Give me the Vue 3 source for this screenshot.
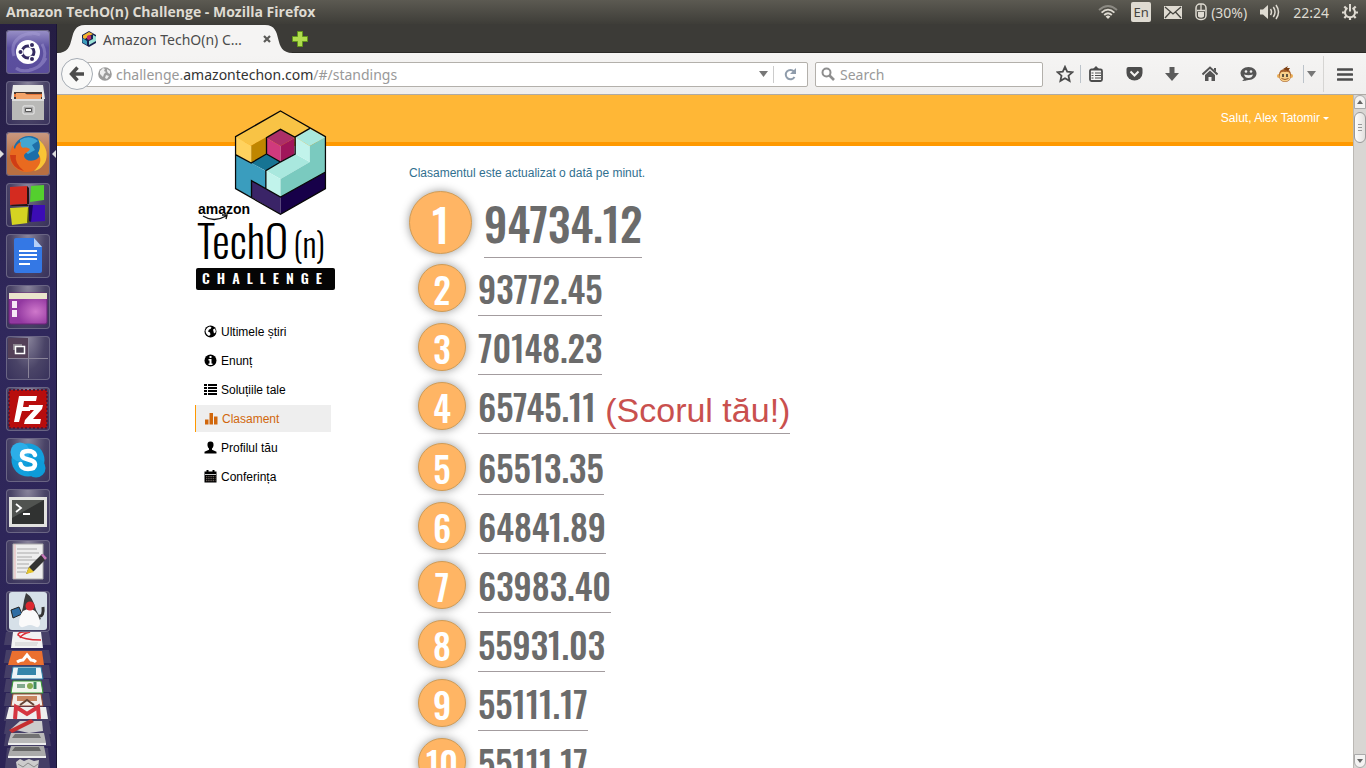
<script setup>
const menu = [
  { icon: 'globe', label: 'Ultimele știri' },
  { icon: 'info', label: 'Enunț' },
  { icon: 'list', label: 'Soluțiile tale' },
  { icon: 'stats', label: 'Clasament', active: true },
  { icon: 'user', label: 'Profilul tău' },
  { icon: 'calendar', label: 'Conferința' }
]
const scores = [
  '94734.12', '93772.45', '70148.23', '65745.11', '65513.35',
  '64841.89', '63983.40', '55931.03', '55111.17', '55111.17'
]
const ownRank = 4
</script>

<template>
  <div class="desktop">
    <header class="panel">
      <h1 class="window-title">Amazon TechO(n) Challenge - Mozilla Firefox</h1>
      <div class="indicators">
        <button class="ind" aria-label="Network">
          <svg width="20" height="16" viewBox="0 0 20 16" fill="none" stroke-width="1.8">
            <path d="M1 6 Q10 -2 19 6" stroke="#8c8a83" /><path d="M3.6 8.6 Q10 2.6 16.4 8.6" stroke="#dfdbd2" />
            <path d="M6.2 11 Q10 7.4 13.8 11" stroke="#dfdbd2" /><path d="M7.6 12.4 Q10 10.4 12.4 12.4 L10 15z" fill="#dfdbd2" />
          </svg>
        </button>
        <button class="ind lang">En</button>
        <button class="ind" aria-label="Messages">
          <svg width="18" height="13" viewBox="0 0 18 13"><path fill="#dfdbd2" d="M0 0h18v13H0z" /><path d="M1 1l8 7 8-7M1 12l5.5-6M17 12l-5.500-6" fill="none" stroke="#45443f" stroke-width="1.3" /></svg>
        </button>
        <button class="ind battery" aria-label="Mouse battery">
          <svg width="12" height="18" viewBox="0 0 12 18"><rect x="1" y="1" width="10" height="15.500" rx="4" fill="none" stroke="#dfdbd2" stroke-width="1.5" /><path d="M6 1v6M2 7.500h8" stroke="#dfdbd2" stroke-width="1.3" /><path d="M3 9h6v4.500q-3 2.500-6 0z" fill="#dfdbd2" /></svg>
          <span>(30%)</span>
        </button>
        <button class="ind" aria-label="Sound">
          <svg width="20" height="16" viewBox="0 0 20 16"><path d="M0 5.500h3L8 1v14L3 10.500H0z" fill="#dfdbd2" /><path d="M10.500 5q2 3 0 6M13.300 3q3.500 5 0 10M16 1q5 7 0 14" fill="none" stroke="#dfdbd2" stroke-width="1.5" /></svg>
        </button>
        <button class="ind">22:24</button>
        <button class="ind" aria-label="Session">
          <svg width="16" height="18" viewBox="0 0 16 18" fill="none" stroke="#dfdbd2"><path d="M5.500 5a5 5 0 1 0 5 0" stroke-width="2" /><path d="M8 1v7.500" stroke-width="2" /><path d="M8 14.500v2.500M2.800 9.500H0M13.200 9.500H16M4.300 13l-2 2M11.700 13l2 2M4.300 5.500l-2-2M11.700 5.500l2-2" stroke-width="2.200" /></svg>
        </button>
      </div>
    </header>

    <div class="workspace">
      <nav class="launcher" aria-label="Launcher">
        <button class="tile dash" aria-label="Dash">
          <svg viewBox="0 0 44 44"><g fill="none" stroke="#a9a0d8" stroke-width="3" opacity=".45"><path d="M8 26C4 14 12 3 26 4M36 14c6 10 2 24-13 26M10 38c8 6 24 2 30-10M34 5C26 1 12 4 7 16" /></g><circle cx="22" cy="22" r="12" fill="#fff" /><circle cx="22" cy="22" r="6" fill="none" stroke="#332a60" stroke-width="3" /><g fill="#332a60" stroke="#fff" stroke-width="1.200"><circle cx="14.500" cy="22" r="2.600" /><circle cx="26" cy="15" r="2.600" /><circle cx="26" cy="29" r="2.600" /></g></svg>
        </button>
        <button class="tile" aria-label="Files">
          <svg viewBox="0 0 44 44"><path d="M7 4h30l2 14H5z" fill="#e8e8e6" /><path d="M8 11h28v8H8z" fill="#4a3a32" /><path d="M8 13h28v3H8z" fill="#e9773a" /><path d="M10 12h9l2 2h14v4H10z" fill="#f3a46a" /><path d="M6 18h32v21H6z" fill="#b9b9b7" /><path d="M6 18h32v2H6z" fill="#ddd" /><rect x="17" y="25" width="11" height="8" rx="1" fill="#aaa" stroke="#eee" /><path d="M19.500 27.500h6v3h-6z" fill="#eee" stroke="#555" /></svg>
        </button>
        <button class="tile firefox running" aria-label="Firefox">
          <svg viewBox="0 0 44 44"><circle cx="23" cy="20" r="16" fill="#1d6ea8" /><path d="M14 8q9-6 18 1l-6 4 3 5-7 4-8-6z" fill="#4cb4dc" opacity=".8" /><path d="M4 23c0-5 2-8 3-10 0 2 1 3 2 4 1-4 3-6 6-7-1 3 0 5 2 6 3-1 5 0 7 1-1 3-6 4-6 7 1 5 8 6 13 3 4-3 5-8 3-13 4 5 5 10 3 15-3 7-9 11-16 11C11 40 4 33 4 23z" fill="#e96a1f" /><path d="M32 7c8 6 10 14 8 21-2 6-7 10-12 11 6-6 7-9 6-14l-2-4c3-5 2-10 0-14z" fill="#f8c435" /><path d="M4 23q1 13 14 16-10-8-8-16z" fill="#cf3d16" /></svg>
        </button>
        <button class="tile" aria-label="Code::Blocks">
          <svg viewBox="0 0 44 44"><path d="M4 4l17-1v18l-17 1z" fill="#d42b20" /><path d="M21 3l2 2v16h-2zM4 22l17-1 2 2H6z" fill="#261414" /><path d="M25 3l13-1v15l-14 2z" fill="#54cf2e" /><path d="M4 25l18-1v16L6 42z" fill="#d4d322" /><path d="M22 24l2 2v13l-3 1z" fill="#4d4e12" /><path d="M26 22h13v16l-14 1z" fill="#3b0cb5" /><path d="M23 22h4l-2 17-2-1z" fill="#180557" /></svg>
        </button>
        <button class="tile" aria-label="Docs">
          <svg viewBox="0 0 44 44"><path d="M8 6q0-2 2-2h18l8 9v24q0 2-2 2H10q-2 0-2-2z" fill="#3478e5" /><path d="M28 4l8 9h-8z" fill="#b6d0f7" /><path d="M13 17h18M13 21h18M13 25h18M13 30h11" stroke="#fff" stroke-width="2" /></svg>
        </button>
        <button class="tile" aria-label="Videos">
          <svg viewBox="0 0 44 44"><defs><radialGradient id="violet" cx=".7" cy=".6"><stop offset="0" stop-color="#cf78cb" /><stop offset="1" stop-color="#9238a0" /></radialGradient></defs><rect x="3" y="8" width="38" height="31" rx="2" fill="url(#violet)" stroke="#6b2379" /><path d="M3 8h38v6H3z" fill="#e9e5cc" /><path d="M6 16h5v7H6zM6 25h5v7H6z" fill="#f6e9f5" /></svg>
        </button>
        <button class="tile" aria-label="Workspace switcher">
          <svg viewBox="0 0 44 44"><path d="M2 2h20v20H2z" fill="#534058" /><path d="M22.500 2v40M2 22.500h40" stroke="#8a8499" /><path d="M7 14V8h9v3H9v3z" fill="#8d8790" /><path d="M9.500 10.500h9v7h-9z" fill="#4a4052" stroke="#fff" stroke-width="1.5" /></svg>
        </button>
        <button class="tile" aria-label="FileZilla">
          <svg viewBox="0 0 44 44"><path d="M3 3h38v38H3z" fill="#b80d0d" /><path d="M3 3h38v38H3z" fill="none" stroke="#5b1530" stroke-width="2" stroke-dasharray="2 2" /><path d="M13 9h18l-1 5H18l-1 6h8l-1 4h-8l-3 11H8z" fill="#fff" /><path d="M23 18h14l-1 4-9 10h8l-1 5H18l1-4 9-10h-6z" fill="#fff" /></svg>
        </button>
        <button class="tile" aria-label="Skype">
          <svg viewBox="0 0 44 44"><circle cx="22" cy="22" r="16.500" fill="#139fdc" /><circle cx="14" cy="14" r="9.500" fill="#2caee8" /><circle cx="30" cy="30" r="9.500" fill="#0d9bd8" /><path d="M29 17c-1-3-3-4-7-4-4 0-6 1.500-6 4 0 6 13 3 13 9.500 0 3-3 4.500-7 4.500-4 0-7-1.500-7.500-5" fill="none" stroke="#fff" stroke-width="4.500" stroke-linecap="round" /></svg>
        </button>
        <button class="tile" aria-label="Terminal">
          <svg viewBox="0 0 44 44"><path d="M3 8h38v30H3z" fill="#e2e2df" /><path d="M6 11h32v24H6z" fill="#303231" /><path d="M6 11h32L6 29z" fill="#505350" /><path d="M10 15l5 4-5 4M17 25h7" fill="none" stroke="#fff" stroke-width="1.800" /></svg>
        </button>
        <button class="tile" aria-label="Text editor">
          <svg viewBox="0 0 44 44"><path d="M7 4h30v35H7z" fill="#eee" stroke="#aaa" /><path d="M11 9h20M11 13h22M11 17h15M11 20h20M11 24h12M11 28h14M11 32h9" stroke="#aaa" /><path d="M9 4v35" stroke="#e6b1b1" /><path d="M23 27L36 14l5 4-13 13-8 3z" fill="#333" /><path d="M35 15l2-1 4 4-2 2z" fill="#c779bb" /><path d="M23 27l5 5-8 2z" fill="#e6c52b" /></svg>
        </button>
        <button class="tile short" aria-label="Java">
          <svg viewBox="0 0 44 41"><rect x="3" y="1" width="38" height="38" rx="3" fill="#d6e0e8" /><path d="M5 19l8-3 3 7-9 4z" fill="#2d6ca3" stroke="#222" /><path d="M20 2q7 4 10 17l5 9q-9 6-21 0l3-12q1-8 3-14z" fill="#3b3b3d" /><path d="M17 20q7-4 12 0 5 5 5 13-1 5-6 2-4-2-8 0-6 3-7-2 0-8 4-13z" fill="#fafafa" /><path d="M33 25q5 1 4-9" fill="none" stroke="#333" stroke-width="3" /><circle cx="24" cy="15" r="4.500" fill="#dc2830" /></svg>
        </button>
        <svg class="stack" viewBox="0 0 57 136">
          <g fill="#5b5674" opacity=".55"><path d="M7 0h43l2 13H5zM7 18h43l2 13H5zM7 33h43l2 13H5zM7 47h43l2 13H5zM7 61h43l2 13H5zM7 75h43l2 14H5zM7 89h43l2 13H5zM7 101h43l2 13H5zM8 116h41l2 20H6z" /></g>
          <path d="M14 0h28l2 16H12z" fill="#f2f2f2" /><path d="M42 8Q24 8 19 3q0-4 12-3-8 2-10 6" fill="none" stroke="#d92c35" stroke-width="1.600" /><path d="M16 11h23M16 13h22" stroke="#ccc" />
          <path d="M13 19h30l2 14H9z" fill="#eb7030" /><path d="M18 30q3-2 6-2l4-5 4 5q3 0 5 2" fill="none" stroke="#fff" stroke-width="3" />
          <path d="M14 35h28l2 12H12z" fill="#edf4f7" stroke="#297fa6" /><path d="M19 36h18v7H18z" fill="#3585aa" />
          <path d="M14 49h28l2 12H12z" fill="#f1f6ed" stroke="#349c32" /><path d="M18 52h8v4h-8z" fill="#80a98c" /><circle cx="31" cy="54" r="3" fill="#86ac50" /><path d="M36 50v7" stroke="#418c60" stroke-width="3" />
          <path d="M14 62h28l2 12H12z" fill="#f3ece8" stroke="#9c4d31" /><path d="M18 64h20v5H18z" fill="#c98560" /><path d="M21 73l7-5 7 5" fill="none" stroke="#654335" stroke-width="2" />
          <path d="M10 75h37l2 12H7z" fill="#eee" /><path d="M16 87l1-12 11 7 11-7 1 12" fill="none" stroke="#d53540" stroke-width="4" />
          <path d="M21 89h22l1 10-14 2-18-4z" fill="#ccc" /><path d="M10 98l22-11 3 3-22 11z" fill="#c62e30" />
          <path d="M12 101h33l2 10H9z" fill="#b9b9b9" /><path d="M16 102h24l2 4H13z" fill="#737373" /><path d="M9 111h38v2H9z" fill="#eee" />
          <path d="M12 114h33l2 10H9z" fill="#aaa" /><path d="M16 115h24l2 4H13z" fill="#666" /><path d="M9 124h38v2H9z" fill="#eee" />
          <path d="M17 130l4-3 4 2 5-2 5 2 5-1-1 8H18z" fill="#ccc" /><path d="M19 132l5 3 5-4 6 4 4-3" fill="none" stroke="#8a8a8a" />
        </svg>
      </nav>

      <div class="browser">
        <div class="tabs">
          <div class="tab">
            <svg class="tab-shape" viewBox="0 0 236 28" preserveAspectRatio="none"><path d="M0 28C22 28 8 0 28 0H208C228 0 214 28 236 28z" fill="#f5f4f3" /></svg>
            <svg class="favicon" viewBox="0 0 16 16"><path d="M8 0l7 4v8l-7 4-7-4V4z" fill="#18224f" /><path d="M2 4.500L8 1l4 2-4 2-4 3-2-1z" fill="#f4b52e" /><path d="M6 5l2-1 2 1v3L8 9 6 8z" fill="#c12a64" /><path d="M1.500 7L6 10v4l-4.500-2.500z" fill="#3a9cbc" /><path d="M12 4l3 1.500V10l-7 4v-4l4-2z" fill="#9be2d6" /></svg>
            <span class="tab-title">Amazon TechO(n) C…</span>
            <button class="close" aria-label="Close tab"><svg width="8" height="8" viewBox="0 0 8 8"><path d="M1 1l6 6M7 1L1 7" stroke="#5b5b58" stroke-width="2.200" /></svg></button>
          </div>
          <button class="new-tab" aria-label="New tab"><svg width="16" height="16" viewBox="0 0 16 16"><path d="M5.500.5h5v5h5v5h-5v5h-5v-5h-5v-5h5z" fill="#b0dc4e" stroke="#62961b" /></svg></button>
        </div>

        <div class="toolbar">
          <button class="back" aria-label="Back"><svg width="16" height="16" viewBox="0 0 16 16"><path d="M8.500 1.500L2.500 8l6 6.500M3 8h12" fill="none" stroke="#4c4c4c" stroke-width="3.400" /></svg></button>
          <div class="url">
            <svg width="14" height="14" viewBox="0 0 14 14"><circle cx="7" cy="7" r="6.800" fill="#9b9b9b" /><path d="M2 4l3-3 2 1-1 2 2 1-2 2-1 3-3-3zM9 2l3 2v3l-2-1-1-2zM8 8l3 1-2 3-2-1z" fill="#eee" /></svg>
            <div class="address" role="textbox" aria-label="Address" contenteditable="true" spellcheck="false">challenge.<b>amazontechon.com</b>/#/standings</div>
            <button class="drop" aria-label="History"><svg width="9" height="6" viewBox="0 0 9 6"><path d="M0 0h9L4.500 6z" fill="#777" /></svg></button>
            <button class="reload" aria-label="Reload"><svg width="13" height="13" viewBox="0 0 13 13"><path d="M10 3.500A4.700 4.700 0 1 0 10.500 9" fill="none" stroke="#8f9cab" stroke-width="2" /><path d="M12 0v6H6z" fill="#8f9cab" /></svg></button>
          </div>
          <label class="search">
            <svg width="14" height="14" viewBox="0 0 14 14"><circle cx="5.500" cy="5.500" r="4" fill="none" stroke="#8e8e8e" stroke-width="2" /><path d="M8.500 8.500L13 13" stroke="#8e8e8e" stroke-width="2.600" /></svg>
            <input type="text" placeholder="Search" aria-label="Search">
          </label>
          <button class="tool star" aria-label="Bookmark"><svg width="18" height="18" viewBox="0 0 18 18"><path d="M9 1.800l2.200 4.800 5.200.6-3.900 3.500 1.100 5.200L9 13.300l-4.600 2.600 1.100-5.200L1.600 7.200l5.200-.6z" fill="none" stroke="#4c4c4c" stroke-width="1.800" /></svg></button>
          <span class="sep"></span>
          <button class="tool lists" aria-label="Bookmarks menu"><svg width="16" height="16" viewBox="0 0 16 16"><rect x="2" y="3.500" width="12" height="11.500" rx="1.500" fill="#f5f4f3" stroke="#4c4c4c" stroke-width="1.800" /><path d="M4 4L8 0l4 4z" fill="#4c4c4c" /><path d="M3.500 7h2M7 7h6M3.500 9.500h2M7 9.500h6M3.500 12h2M7 12h6" stroke="#4c4c4c" stroke-width="1.200" /></svg></button>
          <button class="tool" aria-label="Pocket"><svg width="17" height="16" viewBox="0 0 17 16"><path d="M2.500 1h12Q16.500 1 16.500 3v4a8 7.500 0 0 1-16 0V3Q.5 1 2.500 1z" fill="#4c4c4c" /><path d="M4.500 5.500l4 4 4-4" fill="none" stroke="#f3f2f1" stroke-width="2" /></svg></button>
          <button class="tool" aria-label="Downloads"><svg width="14" height="16" viewBox="0 0 14 16"><path d="M4.500 1h5v6H14l-7 8-7-8h4.500z" fill="#5b5b5b" /></svg></button>
          <button class="tool" aria-label="Home"><svg width="16" height="16" viewBox="0 0 16 16"><path d="M.5 8.500L8 1.500l7.500 7" fill="none" stroke="#555" stroke-width="2" /><path d="M3 9l5-4.500L13 9v6H9.500v-4h-3v4H3z" fill="#555" /><path d="M12 2h2v4l-2-2z" fill="#555" /></svg></button>
          <button class="tool" aria-label="Hello"><svg width="17" height="16" viewBox="0 0 17 16"><path d="M8.500 1c5 0 8 3 8 6.500S13 14 9 14c-2 0-3 1-7 1 2-1 2-2 1.500-2.500A6 6 0 0 1 .5 7.500C.5 4 3.500 1 8.500 1z" fill="#555" /><circle cx="6" cy="5.500" r="1.300" fill="#eee" /><circle cx="11" cy="5.500" r="1.300" fill="#eee" /><path d="M4 8.500q4.500 1.500 9 0-1 3.500-4.500 3.500T4 8.500z" fill="#eee" /></svg></button>
          <button class="tool monkey" aria-label="Greasemonkey"><svg width="16" height="17" viewBox="0 0 16 17"><circle cx="2" cy="10" r="2" fill="#e9ab52" /><circle cx="14" cy="10" r="2" fill="#e9ab52" /><path d="M2 9q0-6 6-6t6 6q0 7-6 7T2 9z" fill="#a8622a" /><path d="M3 8q1-3 5-2 4-1 5 2 2 7-5 7.500Q1 15 3 8z" fill="#f8d089" /><path d="M6 3l5-3-1 2h3l-2 3z" fill="#7d3f12" /><path d="M6 8v3M10 8v3" stroke="#222" stroke-width="1.400" /><path d="M4.500 12.500q3.500 2 7 0" fill="none" stroke="#9c5a25" /></svg></button>
          <span class="sep"></span>
          <button class="tool caret" aria-label="More"><svg width="9" height="6" viewBox="0 0 9 6"><path d="M0 0h9L4.500 6z" fill="#777" /></svg></button>
          <span class="sep tall"></span>
          <button class="tool hamburger" aria-label="Menu"><svg width="16" height="13" viewBox="0 0 16 13"><path d="M1 1.500h14M1 6.500h14M1 11.500h14" stroke="#4c4c4c" stroke-width="2.600" stroke-linecap="round" /></svg></button>
        </div>

        <div class="viewport">
          <div class="page">
            <div class="banner"><a href="#" class="account">Salut, Alex Tatomir <svg width="6" height="3" viewBox="0 0 6 3"><path d="M0 0h6L3 3z" fill="#fff" /></svg></a></div>
            <div class="container">
              <aside class="side">
                <svg class="logo" viewBox="0 0 140 180" role="img" aria-label="Amazon TechO(n) Challenge">
                  <svg x="39.500" y="0" width="92" height="105.300" viewBox="164 31 276 316">
                    <path d="M167 111L302 34 390 86 346 112 302 89 259 113 214 138z" fill="#f8c345" /><path d="M167 111l47 27v52l-47-25z" fill="#ffd25e" /><path d="M214 138l45-25v50l-45 27z" fill="#bf8600" />
                    <path d="M302 90l42 25-42 24-42-24z" fill="#ac2f68" /><path d="M260 115l42 24v48l-42-24z" fill="#d03a7d" /><path d="M302 139l42-24v48l-42 24z" fill="#a0165a" />
                    <path d="M167 165l47 25 44 24v53l-43-24v50l-48-26z" fill="#3a9dbe" /><path d="M214 190l46-27 42 24-44 26z" fill="#177493" />
                    <path d="M390 87l47 26-47 26-43-26zM347 163l43 24-88 51-44-25z" fill="#a9e8de" /><path d="M347 113l43 26v48l-43-24zM258 213l44 25v54l-44-25z" fill="#c1f3eb" /><path d="M437 113v104l-135 75v-54l88-51v-48z" fill="#7acabf" />
                    <path d="M215 243l87 49v52l-87-51z" fill="#3a2467" /><path d="M302 292l135-75v50l-135 77z" fill="#170049" />
                    <path d="M302 34l135 77v156l-135 77-135-77V111zM167 165l47 25 46-27V114l42-25 44 24M260 163l42 24 44-24V112l44-26M258 267v-54l44-26M215 293v-50l87 49 135-75" fill="none" stroke="#080808" stroke-width="4" />
                  </svg>
                  <text class="logo-brand" x="3" y="104">amazon</text>
                  <path d="M8 106q11 7 23 0M27 105l5 0-1 4" fill="none" stroke="#111" stroke-width="1.400" />
                  <text class="logo-name" x="2" y="149">TechO</text><text class="logo-paren" x="98" y="148">(n)</text>
                  <rect x="1" y="158" width="139" height="22" rx="2" fill="#050505" />
                  <text class="logo-sub" x="7" y="174">CHALLENGE</text>
                </svg>
                <nav class="menu" aria-label="Meniu">
                  <a v-for="item in menu" :key="item.label" href="#" :class="{ active: item.active }">
                    <svg class="glyph" viewBox="0 0 13 13" fill="currentColor">
                      <template v-if="item.icon === 'globe'"><circle cx="6.500" cy="6.500" r="6" /><path d="M6 1.500l1.500 1-1 1.500-1.500.5-1 2 2 1 .5 2-1.500 1.500Q1.500 9 1.500 5.500 3 2 6 1.500zM9 4.500l2-1q1 2 .5 4l-1.500 1z" fill="#fff" /></template>
                      <template v-else-if="item.icon === 'info'"><circle cx="6.500" cy="6.500" r="6" /><path d="M5.500 2h2v2h-2zM4.500 5h3v4.500h1V11h-4V9.500h1v-3h-1z" fill="#fff" /></template>
                      <path v-else-if="item.icon === 'list'" d="M0 1h3v2H0zM4 1h9v2H4zM0 4h3v2H0zM4 4h9v2H4zM0 7h3v2H0zM4 7h9v2H4zM0 10h3v2H0zM4 10h9v2H4z" />
                      <path v-else-if="item.icon === 'stats'" d="M0 7.500h3.500v5H0zM4.500 1H8v11.500H4.500zM9 4.500h3.500v8H9z" />
                      <path v-else-if="item.icon === 'user'" d="M6.500.5C9 .5 9.700 2 9.500 4.500 9.300 6 8.500 7 8 7.500v1.300l4.500 2V12.500H.5v-1.700l4.500-2V7.500C4.500 7 3.700 6 3.500 4.500 3.300 2 4 .5 6.500.5z" />
                      <template v-else><path d="M.5 1.500h12v11H.5zM2.500 0h2v2h-2zM8.500 0h2v2h-2z" /><path d="M1 4.500h11" stroke="#fff" stroke-width=".8" /><path d="M2 6.700h9.500M2 8.700h9.500M2 10.700h9.500" stroke="#b5a49a" stroke-width=".7" stroke-dasharray="1.400 .8" /></template>
                    </svg>
                    {{ item.label }}
                  </a>
                </nav>
              </aside>
              <main class="standings">
                <p class="note">Clasamentul este actualizat o dată pe minut.</p>
                <ol>
                  <li v-for="(score, i) in scores" :key="i" :class="{ first: i === 0, own: i + 1 === ownRank }">
                    <span class="rank">{{ i + 1 }}</span>
                    <span class="score">{{ score }}<em v-if="i + 1 === ownRank"> (Scorul tău!)</em></span>
                  </li>
                </ol>
              </main>
            </div>
          </div>
          <div class="scrollbar" aria-hidden="true">
            <span class="cap"><svg width="6" height="4" viewBox="0 0 6 4"><path d="M0 4h6L3 0z" fill="#666" /></svg></span>
            <span class="thumb"></span>
            <span class="cap end"><svg width="6" height="4" viewBox="0 0 6 4"><path d="M0 0h6L3 4z" fill="#666" /></svg></span>
          </div>
        </div>
      </div>
    </div>
  </div>
</template>

<style>
body { overflow: hidden; }
</style>

<style scoped>
* { box-sizing: border-box; }
button { border: 0; padding: 0; background: none; font: inherit; color: inherit; display: flex; align-items: center; justify-content: center; }
svg { display: block; flex: none; }
.desktop { height: 100vh; display: flex; flex-direction: column; font-family: "Noto Sans", "Open Sans", sans-serif; font-size: 14px; }
.panel { height: 24px; flex: none; display: flex; align-items: center; justify-content: space-between; padding: 0 8px 0 6px; background: linear-gradient(#5c5a52, #3e3d38); color: #dfdbd2; }
.window-title { margin: 0; font: 700 14px/24px "Open Sans", sans-serif; }
.indicators { display: flex; align-items: center; gap: 13px; }
.ind { height: 24px; }
.ind.lang { width: 20px; height: 20px; border-radius: 2px; background: #dfdbd2; color: #45443f; font-size: 13px; }
.battery { gap: 4px; }
.workspace { flex: 1; min-height: 0; display: flex; }
.launcher { width: 57px; flex: none; display: flex; flex-direction: column; align-items: center; gap: 7px; padding: 6px 1px 0 0; overflow: hidden; background: linear-gradient(#251d43, #30285c 40%, #2c2456); border-right: 1px solid #1b1536; }
.tile { width: 44px; height: 44px; flex: none; border-radius: 4px; background: radial-gradient(ellipse at 50% 0, #8a859c, #4a4467 55%, #37305a); box-shadow: inset 0 0 0 1px #6a6584; position: relative; }
.tile.short { height: 41px; }
.tile svg { width: 100%; height: 100%; }
.tile.dash { background: linear-gradient(#9a92c8, #5c50a0 40%, #5a4d9c); }
.tile.firefox { background: linear-gradient(#c99a82, #b86f42 60%); }
.running::before, .running::after { content: ""; position: absolute; top: 18px; border: 4px solid transparent; }
.running::before { left: -6px; border-left-color: #ddd; border-right-width: 0; }
.running::after { right: -6px; border-right-color: #ddd; border-left-width: 0; }
.stack { width: 57px; height: 136px; margin-top: -7px; }
.browser { flex: 1; min-width: 0; display: flex; flex-direction: column; }
.tabs { height: 30px; flex: none; display: flex; align-items: flex-end; background: #3c3b37; border-bottom: 1px solid #f5f4f3; box-shadow: inset 0 -1px #2b2a27; }
.tab { position: relative; width: 236px; height: 28px; display: flex; align-items: center; padding: 0 20px 0 24px; color: #4c4c4c; }
.tab-shape { position: absolute; inset: 0; width: 100%; height: 100%; }
.favicon { position: relative; width: 16px; height: 16px; margin-right: 6px; }
.tab-title { position: relative; flex: 1; white-space: nowrap; }
.close { position: relative; width: 12px; height: 16px; }
.new-tab { height: 28px; margin-left: -1px; }
.toolbar { height: 41px; flex: none; display: flex; align-items: center; background: linear-gradient(#f5f4f3, #f0efee); border-bottom: 1px solid #aeaba6; color: #999; }
.back { position: relative; z-index: 1; width: 32px; height: 32px; margin-left: 4px; border-radius: 50%; border: 1px solid #a5acb4; background: #f9f9f8; }
.url { flex: 1; height: 25px; margin-left: -8px; display: flex; align-items: center; padding: 0 0 0 12px; border: 1px solid #b3b0ab; border-radius: 2px; background: #fff; }
.address { flex: 1; margin-left: 4px; outline: 0; white-space: nowrap; }
.address b { font-weight: 400; color: #333; }
.drop { width: 20px; height: 20px; }
.reload { width: 34px; height: 17px; border-left: 1px solid #ccc; }
.search { width: 228px; height: 25px; margin-left: 7px; display: flex; align-items: center; padding: 0 5px; border: 1px solid #b3b0ab; border-radius: 2px; background: #fff; }
.search input { flex: 1; min-width: 0; border: 0; padding: 0 5px; outline: 0; background: none; font: inherit; }
.search input::placeholder { color: #999; opacity: 1; }
.tool { width: 38px; height: 32px; }
.star { width: 31px; margin-left: 6px; }
.lists { width: 30px; margin-right: 4px; }
.monkey { width: 36px; }
.caret { width: 14px; margin-right: 5px; }
.hamburger { width: 42px; }
.sep { width: 1px; height: 18px; background: #bcc3ca; }
.sep.tall { height: 36px; background: #d6d5d3; }
.viewport { flex: 1; min-height: 0; display: flex; }
.page { flex: 1; min-width: 0; overflow: hidden; background: #fff; font: 12px/18px "Liberation Sans", Arial, sans-serif; }
.banner { height: 51px; padding: 14px 24px 0; display: flex; justify-content: flex-end; align-items: flex-start; background: #ffb736; border-bottom: 4px solid #f90; }
.account { display: flex; align-items: center; gap: 3px; color: #fff; text-decoration: none; }
.container { max-width: 1170px; margin: 0 auto; padding-left: 75px; display: flex; align-items: flex-start; gap: 74px; }
.side { width: 140px; flex: none; margin-top: -36px; position: relative; }
.logo { width: 140px; height: 180px; }
.logo-brand { font: 700 14px "Liberation Sans", Arial, sans-serif; }
.logo-name { font: 300 44px "Oswald", "Roboto", sans-serif; }
.logo-paren { font: 300 34px "Oswald", "Roboto", sans-serif; }
.logo-sub { font: 600 14px "Oswald", "Roboto", sans-serif; fill: #fff; letter-spacing: 7px; }
.menu { display: flex; flex-direction: column; gap: 2px; width: 136px; margin-top: 28px; }
.menu a { height: 27px; display: flex; align-items: center; gap: 4px; padding-left: 9px; color: #000; text-decoration: none; }
.menu a.active { background: #eee; border-left: 1px solid #f90; color: #d1670c; }
.glyph { width: 13px; height: 13px; }
.standings { flex: 1; }
.note { margin: 18px 0 9px; color: #31708f; }
ol { list-style: none; margin: 0; padding: 0; }
li { display: flex; align-items: flex-start; gap: 12px; height: 59px; padding-left: 9px; font: 500 35px/49px "Oswald", "Roboto", sans-serif; color: #6b6b6b; }
li.first { height: 73px; padding-left: 0; font-size: 45px; line-height: 64px; }
li.own { height: 61px; }
.rank { width: 48px; height: 48px; border-radius: 50%; border: 1px solid #d09c56; background: #ffb564; box-shadow: 0 0 10px #999; color: #fff; text-align: center; }
.first .rank { width: 63px; height: 63px; }
.score { padding-bottom: 2px; border-bottom: 1px solid #a39c9f; white-space: pre; }
em { font: 34px/34px "Liberation Sans", Arial, sans-serif; color: #c9504e; }
.scrollbar { width: 13px; flex: none; display: flex; flex-direction: column; background: #d8d6d3; border-left: 1px solid #bbb8b4; }
.cap { height: 14px; display: flex; align-items: center; justify-content: center; border: 1px solid #aaa; border-radius: 6px 6px 0 0; background: #f4f3f2; }
.cap.end { margin-top: auto; border-radius: 0 0 6px 6px; }
.thumb { height: 31px; margin-top: 3px; border: 1px solid #999; border-radius: 6px; background: repeating-linear-gradient(#999 0 1px, transparent 1px 3px) center / 4px 7px no-repeat, linear-gradient(90deg, #fff, #e2e0de); }
</style>
